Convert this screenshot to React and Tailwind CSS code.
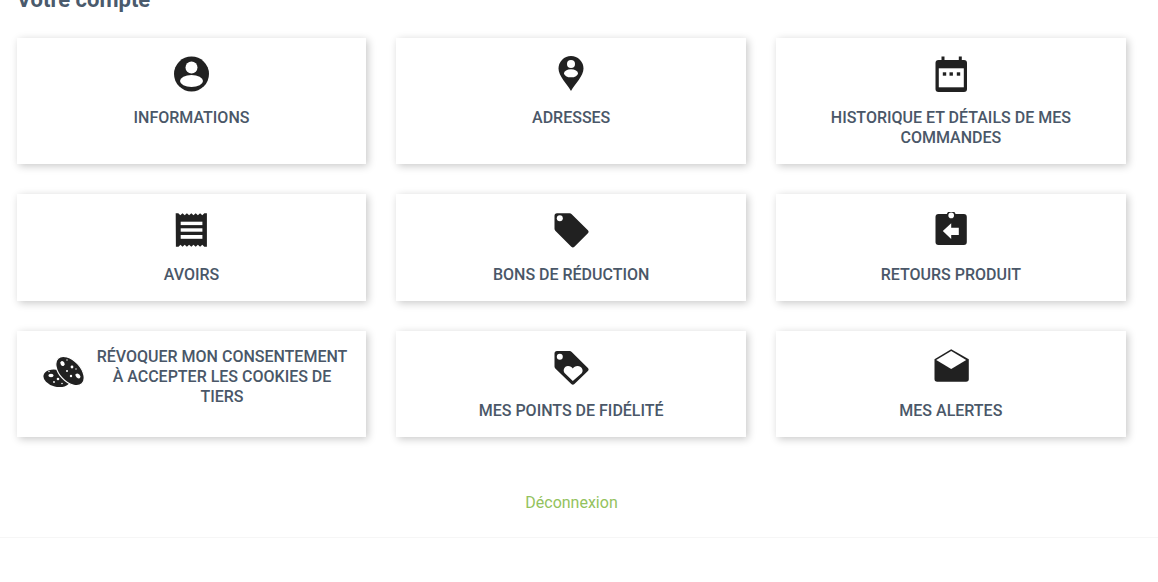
import React from 'react';

const IconUser = () => (
  <svg viewBox="0 0 36 36" className="w-9 h-9" fill="#212121">
    <circle cx="18.500" cy="18" r="17.500" />
    <circle cx="18.500" cy="11.500" r="6" fill="#fff" />
    <ellipse cx="18.500" cy="25" rx="11.500" ry="6" fill="#fff" />
  </svg>
);

const IconPin = () => (
  <svg viewBox="0 0 36 36" className="w-9 h-9" fill="#212121">
    <path d="M18 35C14 28 5.500 20 5.500 12.500a12.500 12.500 0 0 1 25 0C30.500 20 22 28 18 35Z" />
    <circle cx="18" cy="8" r="4" fill="#fff" />
    <ellipse cx="18" cy="17.300" rx="7" ry="4" fill="#fff" />
  </svg>
);

const IconCalendar = () => (
  <svg viewBox="0 0 36 36" className="w-9 h-9" fill="#212121">
    <rect x="8.500" y="0.500" width="3" height="6" />
    <rect x="25.800" y="0.500" width="3" height="6" />
    <rect x="2.500" y="4" width="31.500" height="32" rx="3" />
    <rect x="5.800" y="12.300" width="25" height="19" fill="#fff" />
    <rect x="9.800" y="16.300" width="3.400" height="3.400" />
    <rect x="16.500" y="16.300" width="3.400" height="3.400" />
    <rect x="23.800" y="16.300" width="3.400" height="3.400" />
  </svg>
);

const IconReceipt = () => (
  <svg viewBox="0 0 36 36" className="w-9 h-9" fill="#212121">
    <g transform="translate(0.500 0)">
      <path d="M2.200 1.300h2.600l2 2 2.200-2 2.200 2 2.200-2 2.200 2 2.200-2 2.200 2 2.200-2 2.200 2 2.200-2 2.200 2 2-2h2.600v33.400h-2.600l-2-2-2.200 2-2.200-2-2.200 2-2.200-2-2.200 2-2.200-2-2.200 2-2.200-2-2.200 2-2-2-2 2h-2.600Z" />
      <rect x="7.200" y="9.700" width="21.700" height="3.400" fill="#fff" />
      <rect x="7.200" y="16.300" width="21.700" height="3.400" fill="#fff" />
      <rect x="7.200" y="23" width="21.700" height="3.800" fill="#fff" />
    </g>
  </svg>
);

const IconTag = () => (
  <svg viewBox="0 0 36 36" className="w-9 h-9" fill="#212121">
    <path d="M4 1.300h12.500a3 3 0 0 1 2.200.9l16.200 16a2.200 2.200 0 0 1 0 3L21.400 34.800a2.200 2.200 0 0 1-3.100 0L2.300 18.700a3 3 0 0 1-.8-2V3.800A2.500 2.500 0 0 1 4 1.300Z" />
    <circle cx="6.800" cy="6.300" r="3" fill="#fff" />
  </svg>
);

const IconReturn = () => (
  <svg viewBox="0 0 36 36" className="w-9 h-9" fill="#212121">
    <circle cx="18.200" cy="3.200" r="4.500" />
    <rect x="2.500" y="2" width="31.300" height="31" rx="3" />
    <circle cx="18.200" cy="3.400" r="2.800" fill="#fff" />
    <path d="M9.800 19 18.200 11.300V15.700H25.800V23H18.200V27Z" fill="#fff" />
  </svg>
);

const IconCookies = () => (
  <svg viewBox="0 0 41 31" className="w-[41px] h-[31px]" fill="#212121">
    <ellipse cx="13.700" cy="22.300" rx="13.500" ry="8.500" transform="rotate(14 13.700 22.300)" />
    <ellipse cx="27" cy="15" rx="10.500" ry="17.500" transform="rotate(-43 27 15)" stroke="#fff" strokeWidth="1.200" />
    <g fill="#fff">
      <ellipse cx="8" cy="19.500" rx="2.600" ry="1.700" />
      <circle cx="15" cy="23" r="1.300" />
      <circle cx="11" cy="26" r="0.900" />
      <circle cx="6" cy="15.500" r="0.700" />
      <circle cx="19" cy="27.500" r="0.800" />
      <ellipse cx="19.500" cy="7.500" rx="2" ry="2.600" transform="rotate(-30 19.500 7.500)" />
      <ellipse cx="35" cy="20" rx="2.800" ry="1.900" transform="rotate(40 35 20)" />
      <circle cx="29" cy="11" r="1.400" />
      <circle cx="24" cy="15" r="1" />
      <circle cx="28" cy="20" r="1.200" />
      <circle cx="33" cy="13" r="0.700" />
      <circle cx="24" cy="4" r="0.700" />
    </g>
  </svg>
);

const IconHeartTag = () => (
  <svg viewBox="0 0 36 36" className="w-9 h-9" fill="#212121">
    <path d="M4 2h12.500a3 3 0 0 1 2.200.9l16.200 16a2.200 2.200 0 0 1 0 3L21.400 35a2.200 2.200 0 0 1-3.100 0L2.300 19.400a3 3 0 0 1-.8-2V4.500A2.500 2.500 0 0 1 4 2Z" />
    <circle cx="6.800" cy="7.700" r="3" fill="#fff" />
    <path d="M19.800 32 11.800 24.300C9.500 21.800 11 17 15 17c2.300 0 3.800 1 4.800 2.600C20.800 18 22.300 17 24.600 17c4 0 6.500 4.300 4.100 7.300Z" fill="#fff" />
  </svg>
);

const IconMail = () => (
  <svg viewBox="0 0 36 36" className="w-9 h-9" fill="#212121">
    <path d="M18.200.3 35.800 10.300V30a2.700 2.700 0 0 1-2.700 2.700H4.200A2.700 2.700 0 0 1 1.500 30V10.300Z" />
    <path d="M3.200 11 18.200 2 33.200 11 18.200 20Z" fill="#fff" />
  </svg>
);

const items = [
  { label: 'INFORMATIONS', icon: <IconUser /> },
  { label: 'ADRESSES', icon: <IconPin /> },
  { label: 'HISTORIQUE ET DÉTAILS DE MES COMMANDES', icon: <IconCalendar /> },
  { label: 'AVOIRS', icon: <IconReceipt /> },
  { label: 'BONS DE RÉDUCTION', icon: <IconTag /> },
  { label: 'RETOURS PRODUIT', icon: <IconReturn /> },
  { label: 'RÉVOQUER MON CONSENTEMENT À ACCEPTER LES COOKIES DE TIERS', icon: <IconCookies />, inline: true },
  { label: 'MES POINTS DE FIDÉLITÉ', icon: <IconHeartTag /> },
  { label: 'MES ALERTES', icon: <IconMail /> },
];

function Card({ label, icon, inline }) {
  if (inline) {
    return (
      <a className="flex items-start bg-white shadow-[2px_2px_8px_0_rgba(0,0,0,0.22)] pl-[26px] pr-[13px] pt-[16px]">
        <span className="shrink-0 mt-[9px]">{icon}</span>
        <span className="flex-1 ml-[7px] text-center text-[16px] leading-[20px] font-medium text-[#4a5768]">{label}</span>
      </a>
    );
  }
  return (
    <a className="flex flex-col items-center bg-white shadow-[2px_2px_8px_0_rgba(0,0,0,0.22)] px-[10px] pt-[18px] pb-[16.05px]">
      <span className="h-9 mb-[16.45px]">{icon}</span>
      <span className="text-center text-[16px] leading-[20px] font-medium text-[#4a5768]">{label}</span>
    </a>
  );
}

export default function App() {
  return (
    <div className="h-[582px] overflow-hidden bg-white font-['Roboto',sans-serif]">
      <div className="pl-[16.67px] pr-[32.33px]">
        <h1 className="-mt-[11px] mb-[26.8px] h-[22px] text-[22px] leading-[22px] font-bold text-[#4a5a6c]">Votre compte</h1>
        <div className="grid grid-cols-3 gap-[30px]">
          {items.map((item) => (
            <Card key={item.label} {...item} />
          ))}
        </div>
      </div>
      <div className="mt-[56px] pb-[24px] border-b border-[#f6f6f6] text-center pr-[15px]">
        <a className="text-[16px] leading-[20px] text-[#93c25d] block">Déconnexion</a>
      </div>
    </div>
  );
}
